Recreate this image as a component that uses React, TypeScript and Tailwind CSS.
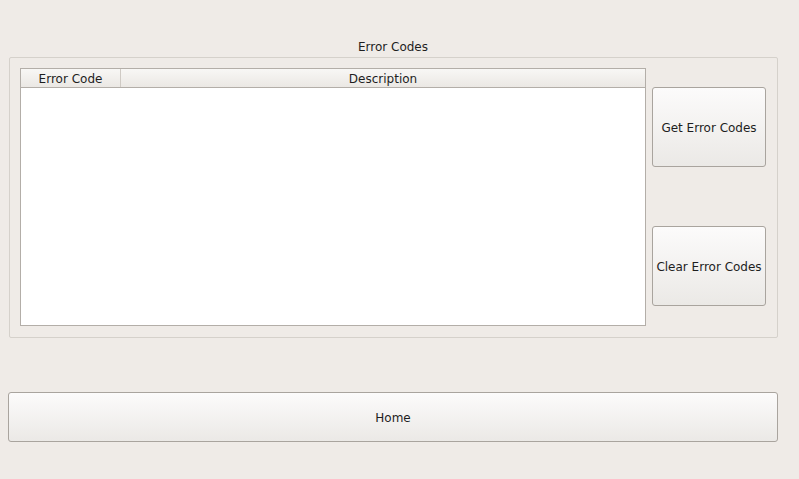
const btn =
  "flex items-center justify-center pt-[2px] rounded-[3px] border border-[#a9a49e] bg-gradient-to-b from-[#fcfbfb] to-[#ebe9e6] text-[12px] text-[#1e1e1e]";

export default function App() {
  return (
    <div
      className="w-[799px] h-[479px] bg-[#efebe7] pt-[38px] pl-[8px] pr-[21px]"
      style={{ fontFamily: '"DejaVu Sans", sans-serif' }}
    >
      <div className="h-[19px] text-center text-[12px] leading-[19px] text-[#1e1e1e]">
        Error Codes
      </div>
      <div className="ml-[1px] h-[281px] border border-[#d5d1cb] rounded-[2px] flex pl-[10px] pt-[10px] pr-[11px]">
        <div className="w-[626px] h-[258px] border border-[#b3aea8] bg-white flex flex-col">
          <div className="flex h-[19px] border-b border-[#b3aea8] bg-gradient-to-b from-[#f8f7f5] to-[#ebe8e4] text-[12px] text-[#1e1e1e] leading-[20px]">
            <div className="w-[100px] border-r border-[#cfcac4] text-center">
              Error Code
            </div>
            <div className="flex-1 text-center">Description</div>
          </div>
          <div className="flex-1" />
        </div>
        <div className="ml-[6px] w-[114px] pt-[19px] flex flex-col gap-[59px]">
          <button className={`${btn} h-[80px]`}>Get Error Codes</button>
          <button className={`${btn} h-[80px]`}>Clear Error Codes</button>
        </div>
      </div>
      <button className={`${btn} mt-[54px] w-[770px] h-[50px]`}>Home</button>
    </div>
  );
}
